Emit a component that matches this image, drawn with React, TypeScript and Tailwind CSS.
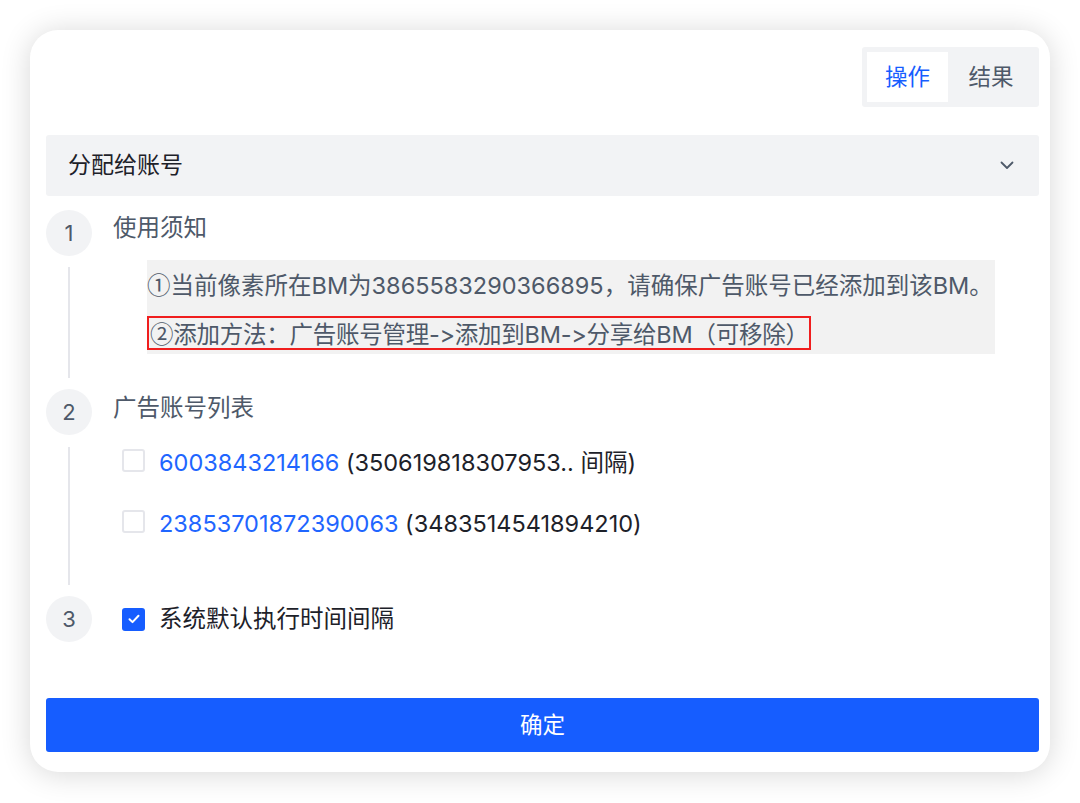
import React from 'react';

const font = "font-['Inter','Noto_Sans_CJK_SC',sans-serif] [font-feature-settings:'calt'_0,'liga'_0]";
const cjk = "font-['Noto_Sans_CJK_SC',sans-serif]";

const StepCircle = ({ n }: { n: number }) => (
  <div className="w-[46px] h-[46px] shrink-0 rounded-full bg-[#f2f3f5] flex items-center justify-center text-[22px] text-[#4e5969]">
    {n}
  </div>
);

const Checkbox = ({ checked }: { checked?: boolean }) =>
  checked ? (
    <span className="w-[23px] h-[23px] shrink-0 rounded-[3px] bg-[#165dff] flex items-center justify-center">
      <svg width="12" height="10" viewBox="0 0 12 10" fill="none">
        <path d="M1.5 5.2l3 2.9 6-6.3" stroke="#fff" strokeWidth="2" strokeLinecap="round" strokeLinejoin="round" />
      </svg>
    </span>
  ) : (
    <span className="w-[23px] h-[23px] shrink-0 rounded-[3px] border-2 border-[#e5e6eb] bg-white" />
  );

const accounts = [
  { id: '6003843214166', extra: '(350619818307953.. 间隔)' },
  { id: '23853701872390063', extra: '(3483514541894210)' },
];

export default function App() {
  return (
    <div className={`min-h-screen bg-white pt-[30px] pl-[30px] ${font}`}>
      <div className="w-[1020px] h-[742px] bg-white rounded-[28px] shadow-[0_2px_30px_rgba(0,0,0,0.16)] pl-4 pr-[11px] pt-[17px] pb-5 flex flex-col">
        {/* tabs */}
        <div className="flex justify-end shrink-0">
          <div className="flex h-[60px] p-[5px] bg-[#f2f3f5] rounded-[3px]">
            <div className="w-[81px] h-[50px] bg-white flex items-center justify-center text-[22.5px] text-[#165dff]">
              操作
            </div>
            <div className="w-[86px] h-[50px] flex items-center justify-center text-[22.5px] text-[#4e5969]">
              结果
            </div>
          </div>
        </div>

        {/* select */}
        <div className="mt-[28px] h-[61px] shrink-0 rounded-[3px] bg-[#f2f3f5] flex items-center justify-between pl-[22px] pr-[25px]">
          <span className="text-[23px] text-[#1d2129]">分配给账号</span>
          <svg width="14" height="9" viewBox="0 0 14 9" fill="none">
            <path d="M1.5 1.5l5.5 5.5 5.5-5.5" stroke="#4e5969" strokeWidth="1.8" strokeLinecap="round" strokeLinejoin="round" />
          </svg>
        </div>

        {/* step 1 */}
        <div className="mt-[14px] flex shrink-0">
          <div className="w-[46px] flex flex-col items-center">
            <StepCircle n={1} />
            <div className="w-[2px] flex-1 bg-[#e5e6eb] my-[11px]" />
          </div>
          <div className="flex-1 pl-[21px] pb-[35px]">
            <div className="text-[23.5px] leading-[36px] h-[36px] text-[#4e5969]">使用须知</div>
            <div className="mt-[14px] ml-[34px] mr-[44px] bg-[#f2f2f2] pt-[4px] pb-[4px] text-[23.5px] text-[#4e5969]">
              <div className="leading-[40px] h-[40px] whitespace-nowrap">
                <span className={cjk}>①</span>当前像素所在BM为3865583290366895，请确保广告账号已经添加到该BM。
              </div>
              <div className="mt-[12px] flex">
                <span className="block h-[34px] whitespace-nowrap border-2 border-[#f01e1e] leading-[30px] pl-[1px] tracking-[-0.25px]">
                  <span className={cjk}>②</span>添加方法：广告账号管理-&gt;添加到BM-&gt;分享给BM（可移除）
                </span>
              </div>
            </div>
          </div>
        </div>

        {/* step 2 */}
        <div className="flex shrink-0">
          <div className="w-[46px] flex flex-col items-center">
            <StepCircle n={2} />
            <div className="w-[2px] flex-1 bg-[#e5e6eb] mt-[12px] mb-[11px]" />
          </div>
          <div className="flex-1 pl-[21px] pb-[55px]">
            <div className="text-[23.5px] leading-[38px] h-[38px] text-[#4e5969]">广告账号列表</div>
            <div className="mt-[13px] flex flex-col gap-[21px] ml-[9px]">
              {accounts.map((a) => (
                <div key={a.id} className="h-[40px] flex items-center gap-[14px]">
                  <Checkbox />
                  <span className="text-[23.5px] text-[#1d2129] pt-[5px]">
                    <span className="text-[#1f66ff]">{a.id}</span> {a.extra}
                  </span>
                </div>
              ))}
            </div>
          </div>
        </div>

        {/* step 3 */}
        <div className="flex shrink-0">
          <div className="w-[46px] flex flex-col items-center">
            <StepCircle n={3} />
          </div>
          <div className="flex-1 pl-[21px]">
            <div className="h-[46px] ml-[9px] flex items-center gap-[14px]">
              <Checkbox checked />
              <span className="text-[23.5px] text-[#1d2129]">系统默认执行时间间隔</span>
            </div>
          </div>
        </div>

        <button className="mt-[56px] h-[54px] shrink-0 w-full rounded-[3px] bg-[#165dff] text-white text-[22.5px]">
          确定
        </button>
      </div>
    </div>
  );
}
